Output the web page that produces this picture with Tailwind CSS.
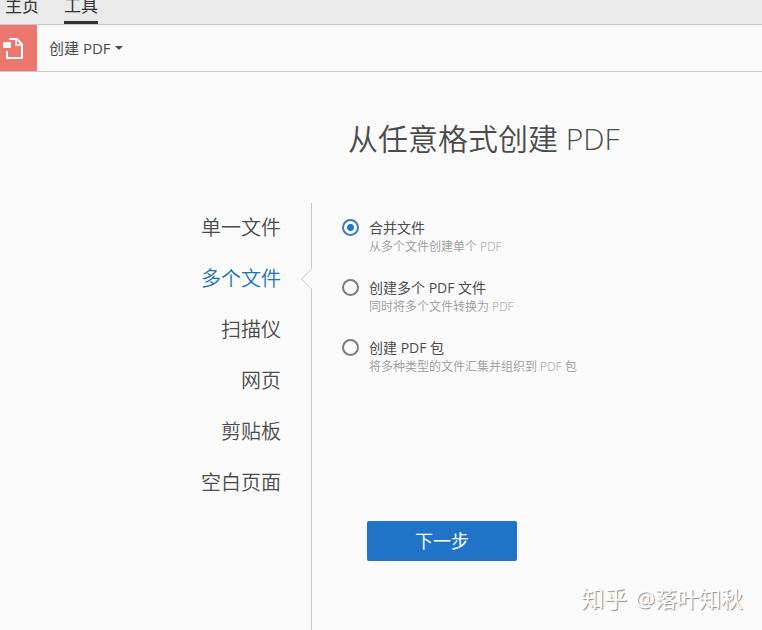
<!DOCTYPE html>
<html lang="zh-CN">
    <head>
        <meta charset="UTF-8" />
        <meta name="viewport" content="width=device-width, initial-scale=1.0" />
        <script src="https://cdn.jsdelivr.net/npm/@tailwindcss/browser@4"></script>
        <title>创建 PDF</title>
    </head>
    <body
        class="flex flex-col min-h-screen overflow-x-hidden bg-[#fafafa] text-[#4b4b4b] font-['Open_Sans','Noto_Sans_CJK_SC',sans-serif]"
    >
        <!-- Tabs -->
        <header class="h-[25px] bg-[#eaeaea] border-b border-[#c8c8c8]">
            <nav class="flex h-6 gap-[25px] pl-[5px] text-[17px] leading-3 text-[#323232]">
                <a href="#home" class="h-6">主页</a>
                <a href="#tools" class="h-6 border-b-3 border-[#323232]">工具</a>
            </nav>
        </header>

        <!-- Toolbar -->
        <div class="flex items-center h-[47px] border-b border-[#cacaca]">
            <div class="flex items-center w-[37px] h-full bg-[#ec776f]">
                <svg class="w-6 h-6" viewBox="0 0 24 24" fill="none" stroke="#fff" stroke-width="2">
                    <path d="M9 3H17L22 8.500V22H7V15" stroke-linejoin="round" />
                    <path d="M16 3V9H22" stroke-width="1.500" />
                    <rect x="3" y="6" width="8" height="6" rx="1" fill="#fff" stroke="none" />
                </svg>
            </div>
            <button type="button" class="flex items-center gap-1 ml-3 text-[15px]">
                创建 PDF
                <svg class="w-2 h-1" viewBox="0 0 8 4" fill="#4b4b4b">
                    <path d="M0 0H8L4 4Z" />
                </svg>
            </button>
        </div>

        <main class="flex flex-col grow">
            <h1 class="pt-[43px] pb-10 pl-[348px] text-[30px] leading-12 font-[350]">
                从任意格式创建 PDF
            </h1>

            <div class="flex grow">
                <!-- Source list -->
                <nav
                    class="relative flex flex-col items-end w-[312px] shrink-0 gap-[21px] pt-[10px] pr-[30px] border-r border-[#c8c8c8] text-xl leading-[30px] font-[350]"
                >
                    <a href="#single">单一文件</a>
                    <a href="#multiple" class="text-[#1c73b5]">多个文件</a>
                    <a href="#scanner">扫描仪</a>
                    <a href="#web">网页</a>
                    <a href="#clipboard">剪贴板</a>
                    <a href="#blank">空白页面</a>
                    <svg class="absolute -right-px top-16 w-3 h-6" viewBox="0 0 12 24">
                        <path d="M12 0V24H10V0Z" fill="#fafafa" />
                        <path d="M11.500 0V2L1.500 12L11.500 22V24" fill="#fafafa" stroke="#c8c8c8" />
                    </svg>
                </nav>

                <!-- Options -->
                <form class="grow pt-[15px] pl-[30px] pr-6">
                    <div class="flex flex-col gap-[22px] text-sm leading-5">
                        <label class="flex gap-[10px]">
                            <input
                                type="radio"
                                name="mode"
                                checked
                                class="appearance-none shrink-0 w-[17px] h-[17px] mt-px rounded-full border-2 border-[#7c7c7c] checked:border-[#3b7cbc] checked:bg-[radial-gradient(circle,#2173c8_3px,transparent_4px)]"
                            />
                            <span>
                                <span class="block">合并文件</span>
                                <span class="block text-xs leading-[18px] font-[350] text-[#9b9b9b]">从多个文件创建单个 PDF</span>
                            </span>
                        </label>
                        <label class="flex gap-[10px]">
                            <input
                                type="radio"
                                name="mode"
                                class="appearance-none shrink-0 w-[17px] h-[17px] mt-px rounded-full border-2 border-[#7c7c7c] checked:border-[#3b7cbc] checked:bg-[radial-gradient(circle,#2173c8_3px,transparent_4px)]"
                            />
                            <span>
                                <span class="block">创建多个 PDF 文件</span>
                                <span class="block text-xs leading-[18px] font-[350] text-[#9b9b9b]">同时将多个文件转换为 PDF</span>
                            </span>
                        </label>
                        <label class="flex gap-[10px]">
                            <input
                                type="radio"
                                name="mode"
                                class="appearance-none shrink-0 w-[17px] h-[17px] mt-px rounded-full border-2 border-[#7c7c7c] checked:border-[#3b7cbc] checked:bg-[radial-gradient(circle,#2173c8_3px,transparent_4px)]"
                            />
                            <span>
                                <span class="block">创建 PDF 包</span>
                                <span class="block text-xs leading-[18px] font-[350] text-[#9b9b9b]">将多种类型的文件汇集并组织到 PDF 包</span>
                            </span>
                        </label>
                    </div>
                    <button
                        type="submit"
                        class="block w-[150px] h-10 mt-[145px] ml-[25px] rounded-xs bg-[#2173c8] text-lg text-white"
                    >
                        下一步
                    </button>
                </form>
            </div>
        </main>

        <!-- Watermark -->
        <p
            class="absolute right-[19px] bottom-4 flex gap-2 text-[22px] leading-8 text-white text-shadow-[1px_1px_1px_#888888]"
        >
            <span class="text-[23px]">知乎</span>
            <span>@落叶知秋</span>
        </p>
    </body>
</html>
